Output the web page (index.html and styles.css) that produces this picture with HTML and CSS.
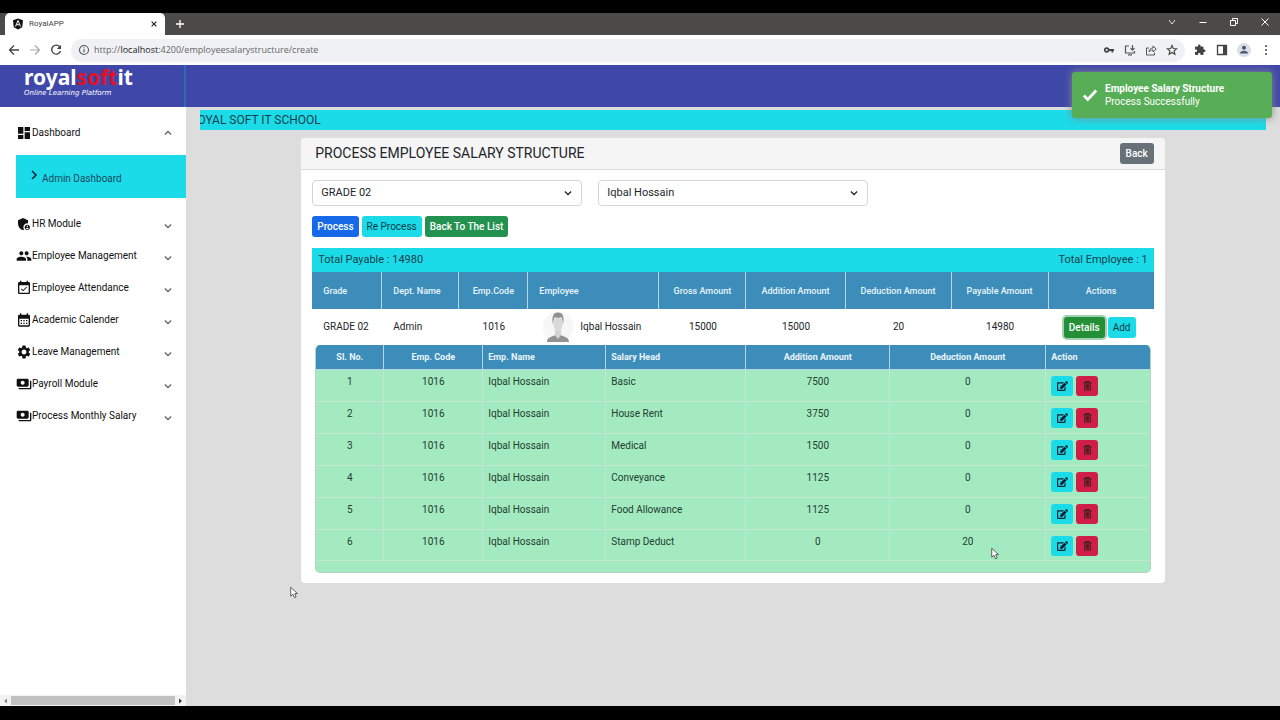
FILE: index.html
```html
<!DOCTYPE html>
<html lang="en">
<head>
<meta charset="utf-8">
<title>RoyalAPP</title>
<link rel="stylesheet" href="styles.css">
</head>
<body>
<svg class="sprite" aria-hidden="true">
  <symbol id="down" viewBox="0 0 16 16"><path d="M3 5.5l5 5 5-5" fill="none" stroke="currentColor" stroke-width="2"/></symbol>
  <symbol id="edit" viewBox="0 0 576 512"><path fill="currentColor" d="M402.6 83.2l90.2 90.2c3.8 3.8 3.8 10 0 13.8L274.4 405.6l-92.8 10.3c-12.4 1.4-22.9-9.1-21.5-21.5l10.3-92.8L388.8 83.2c3.8-3.8 10-3.8 13.8 0zm162-22.9l-48.8-48.8c-15.2-15.2-39.9-15.2-55.2 0l-35.4 35.4c-3.8 3.8-3.8 10 0 13.8l90.2 90.2c3.8 3.8 10 3.8 13.8 0l35.4-35.4c15.2-15.3 15.2-40 0-55.2zM384 346.2V448H64V128h229.8c3.2 0 6.2-1.3 8.5-3.5l40-40c7.6-7.6 2-20.5-8.5-20.5H48C21.5 64 0 85.5 0 112v352c0 26.5 21.5 48 48 48h352c26.5 0 48-21.5 48-48V306.2c0-10.7-12.9-16-20.5-8.5l-40 40c-2.2 2.3-3.5 5.3-3.5 8.5z"/></symbol>
  <symbol id="trash" viewBox="0 0 16 16"><path d="M1.500 3h13M5.500 2.500V1h5v1.500M3.500 3v11.500h9V3M6.200 5v7.500M8 5v7.500M9.800 5v7.500" fill="none" stroke="currentColor" stroke-width="1.700"/></symbol>
  <symbol id="pay" viewBox="0 0 24 24"><path fill="currentColor" d="M19 14V6c0-1.100-.9-2-2-2H3c-1.100 0-2 .9-2 2v8c0 1.100.9 2 2 2h14c1.100 0 2-.9 2-2zm-9-1c-1.660 0-3-1.340-3-3s1.340-3 3-3 3 1.340 3 3-1.340 3-3 3zm13-6v11c0 1.100-.9 2-2 2H4v-2h17V7h2z"/></symbol>
  <symbol id="pointer" viewBox="0 0 12 16"><path d="M1 1v12l3-2.700L6 15l2.200-1L6.300 9.500H10z" fill="#fff" stroke="#333" stroke-width="1"/></symbol>
</svg>

<div class="tabs">
  <div class="tab">
    <svg class="i12" viewBox="0 0 24 24"><path d="M12 1L2 4.500l1.500 14L12 23l8.500-4.500L22 4.500z" fill="#111"/><path d="M7 17l5-12 5 12M9 13.500h6" fill="none" stroke="#fff" stroke-width="2"/></svg>
    <span class="tab-name">RoyalAPP</span>
    <svg class="i8" viewBox="0 0 10 10"><path d="M2 2l6 6M8 2l-6 6" stroke="#222" stroke-width="1.500"/></svg>
  </div>
  <svg class="i12 plus" viewBox="0 0 12 12"><path d="M6 2v8M2 6h8" stroke="#fff" stroke-width="1.300"/></svg>
  <div class="win">
    <svg class="i12" viewBox="0 0 12 12"><path d="M3 4l3 4 3-4" fill="none" stroke="#ddd"/></svg>
    <svg class="i12" viewBox="0 0 12 12"><path d="M2.500 6.500h7" stroke="#fff"/></svg>
    <svg class="i12" viewBox="0 0 12 12"><path d="M2.500 4.500h5v5h-5zM4.500 4V2.500h5v5H8" fill="none" stroke="#fff"/></svg>
    <svg class="i12" viewBox="0 0 12 12"><path d="M2.500 2.500l7 7M9.500 2.500l-7 7" stroke="#fff"/></svg>
  </div>
</div>

<div class="toolbar">
  <svg class="i12" viewBox="0 0 12 12"><path d="M11 6H2M6 1.500L1.500 6 6 10.500" fill="none" stroke="#444" stroke-width="1.300"/></svg>
  <svg class="i12" viewBox="0 0 12 12"><path d="M1 6h9M6 1.500L10.500 6 6 10.500" fill="none" stroke="#aaa" stroke-width="1.200"/></svg>
  <svg class="i12" viewBox="0 0 12 12"><path d="M10 3.200A4.500 4.500 0 1 0 10.500 7" fill="none" stroke="#444" stroke-width="1.400"/><path d="M11 .8V5H6.800z" fill="#444"/></svg>
  <div class="address">
    <svg class="i12" viewBox="0 0 12 12"><circle cx="6" cy="6" r="4.500" fill="none" stroke="#555" stroke-width="1.100"/><path d="M6 5.200v3.300M6 3.200v1.100" stroke="#555" stroke-width="1.200"/></svg>
    <span class="url">http://<b>localhost</b>:4200/employeesalarystructure/create</span>
    <svg class="i12" viewBox="0 0 12 12"><circle cx="3.700" cy="6" r="1.900" fill="none" stroke="#444" stroke-width="1.700"/><path d="M5.500 6H11M9.300 6v2.500" stroke="#444" stroke-width="1.800"/></svg>
    <svg class="i12" viewBox="0 0 12 12"><path d="M5 2H1.500v7h9V7M4 10.800h4M8.500 1v5M6.500 4.200l2 2 2-2" fill="none" stroke="#555" stroke-width="1.200"/></svg>
    <svg class="i12" viewBox="0 0 12 12"><path d="M4 4H1.500v7h8V8.500M4 8c.2-2.500 1.500-3.800 4-4V2l3.200 3L8 7.800V6C6 6 5 6.500 4 8z" fill="none" stroke="#555"/></svg>
    <svg class="i12" viewBox="0 0 12 12"><path d="M6 1.500l1.300 3 3.300.3-2.500 2.200.8 3.300L6 8.500l-2.900 1.800.8-3.300-2.500-2.200 3.300-.3z" fill="none" stroke="#444" stroke-width="1.100"/></svg>
  </div>
  <div class="ext">
    <svg class="i12" viewBox="0 0 24 24"><path fill="#444" d="M20.500 11H19V7c0-1.100-.9-2-2-2h-4V3.500a2.500 2.500 0 0 0-5 0V5H4c-1.100 0-2 .9-2 2v3.800h1.500a2.700 2.700 0 0 1 0 5.400H2V20c0 1.100.9 2 2 2h3.800v-1.500a2.700 2.700 0 0 1 5.400 0V22H17c1.100 0 2-.9 2-2v-4h1.500a2.500 2.500 0 0 0 0-5z"/></svg>
    <svg class="i12" viewBox="0 0 12 12"><path d="M1.500 1.500h9v9h-9z" fill="none" stroke="#444" stroke-width="1.300"/><path d="M7 1h4v10H7z" fill="#444"/></svg>
    <span class="avatar"><svg class="i12" viewBox="0 0 12 12"><circle cx="6" cy="3.800" r="2" fill="#4a5570"/><path d="M2 9.500c0-2 2-2.800 4-2.800s4 .8 4 2.800z" fill="#4a5570"/></svg></span>
    <svg class="i12" viewBox="0 0 12 12"><circle cx="6" cy="2" r="1" fill="#444"/><circle cx="6" cy="6" r="1" fill="#444"/><circle cx="6" cy="10" r="1" fill="#444"/></svg>
  </div>
</div>

<header class="top">
  <div class="brand">
    <div class="logo">royal<span>soft</span>it</div>
    <div class="tagline">Online Learning Platform</div>
  </div>
</header>

<div class="shell">
  <aside class="side">
    <nav class="menu">
      <button class="item"><svg class="i16" viewBox="0 0 24 24"><path d="M3 13h8V3H3v10zm0 8h8v-6H3v6zm10 0h8V11h-8v10zm0-18v6h8V3h-8z"/></svg><span>Dashboard</span><svg class="arrow up"><use href="#down"/></svg></button>
      <a class="sub" href="#"><svg class="i12" viewBox="0 0 12 12"><path d="M4 2l4 4-4 4" fill="none" stroke="#123" stroke-width="1.500"/></svg><span>Admin Dashboard</span></a>
      <button class="item"><svg class="i16" viewBox="0 0 24 24"><path d="M17 11c.34 0 .67.04 1 .09V6.270L10.500 3 3 6.270v4.910c0 4.540 3.200 8.790 7.500 9.820.55-.13 1.080-.32 1.600-.55-.69-.98-1.100-2.170-1.100-3.450 0-3.310 2.690-6 6-6z"/><path d="M17 13c-2.210 0-4 1.790-4 4s1.790 4 4 4 4-1.790 4-4-1.790-4-4-4zm0 1.380c.62 0 1.120.51 1.120 1.120s-.51 1.120-1.120 1.120-1.120-.51-1.120-1.120.5-1.120 1.120-1.120zm0 5.370c-.93 0-1.740-.46-2.240-1.170.05-.72 1.510-1.080 2.240-1.080s2.190.36 2.240 1.080c-.5.71-1.310 1.170-2.240 1.170z"/></svg><span>HR Module</span><svg class="arrow"><use href="#down"/></svg></button>
      <button class="item"><svg class="i16" viewBox="0 0 24 24"><path d="M16 11c1.660 0 2.990-1.340 2.990-3S17.660 5 16 5c-1.660 0-3 1.340-3 3s1.340 3 3 3zm-8 0c1.660 0 2.990-1.340 2.990-3S9.660 5 8 5C6.340 5 5 6.340 5 8s1.340 3 3 3zm0 2c-2.330 0-7 1.170-7 3.500V19h14v-2.500c0-2.330-4.670-3.500-7-3.500zm8 0c-.29 0-.62.02-.97.05 1.160.84 1.970 1.970 1.970 3.450V19h6v-2.500c0-2.330-4.670-3.500-7-3.500z"/></svg><span>Employee Management</span><svg class="arrow"><use href="#down"/></svg></button>
      <button class="item"><svg class="i16" viewBox="0 0 24 24"><path d="M16.530 11.060L15.470 10l-4.880 4.880-2.120-2.120-1.060 1.060L10.590 17l5.940-5.940zM19 3h-1V1h-2v2H8V1H6v2H5c-1.110 0-1.990.9-1.990 2L3 19c0 1.100.89 2 2 2h14c1.100 0 2-.9 2-2V5c0-1.100-.9-2-2-2zm0 16H5V8h14v11z"/></svg><span>Employee Attendance</span><svg class="arrow"><use href="#down"/></svg></button>
      <button class="item"><svg class="i16" viewBox="0 0 24 24"><path d="M19 4h-1V2h-2v2H8V2H6v2H5c-1.110 0-1.990.9-1.990 2L3 20c0 1.100.89 2 2 2h14c1.100 0 2-.9 2-2V6c0-1.100-.9-2-2-2zm0 16H5V10h14v10zM7 12h2v2H7zm4 0h2v2h-2zm4 0h2v2h-2zm-8 4h2v2H7zm4 0h2v2h-2zm4 0h2v2h-2z"/></svg><span>Academic Calender</span><svg class="arrow"><use href="#down"/></svg></button>
      <button class="item"><svg class="i16" viewBox="0 0 24 24"><path d="M19.140 12.940c.04-.3.06-.61.06-.94 0-.32-.02-.64-.07-.94l2.030-1.580c.18-.14.23-.41.12-.61l-1.920-3.320c-.12-.22-.37-.29-.59-.22l-2.390.96c-.5-.38-1.030-.7-1.620-.94l-.36-2.540c-.04-.24-.24-.41-.48-.41h-3.840c-.24 0-.43.17-.47.41l-.36 2.540c-.59.24-1.130.57-1.620.94l-2.390-.96c-.22-.08-.47 0-.59.22L2.740 8.870c-.12.21-.08.47.12.61l2.030 1.580c-.05.3-.09.63-.09.94s.02.64.07.94l-2.030 1.580c-.18.14-.23.41-.12.61l1.920 3.320c.12.22.37.29.59.22l2.390-.96c.5.38 1.030.7 1.620.94l.36 2.540c.05.24.24.41.48.41h3.840c.24 0 .44-.17.47-.41l.36-2.540c.59-.24 1.130-.56 1.620-.94l2.390.96c.22.08.47 0 .59-.22l1.920-3.320c.12-.22.07-.47-.12-.61l-2.010-1.580zM12 15.600c-1.980 0-3.600-1.620-3.600-3.600s1.620-3.600 3.600-3.600 3.600 1.620 3.600 3.600-1.620 3.600-3.600 3.600z"/></svg><span>Leave Management</span><svg class="arrow"><use href="#down"/></svg></button>
      <button class="item"><svg class="i16"><use href="#pay"/></svg><span>Payroll Module</span><svg class="arrow"><use href="#down"/></svg></button>
      <button class="item"><svg class="i16"><use href="#pay"/></svg><span>Process Monthly Salary</span><svg class="arrow"><use href="#down"/></svg></button>
    </nav>
    <div class="scroll">
      <svg viewBox="0 0 10 10"><path d="M6.500 2.500v5L3.500 5z" fill="#888"/></svg>
      <div class="thumb"></div>
      <svg viewBox="0 0 10 10"><path d="M3.500 2.500v5l3-2.500z" fill="#333"/></svg>
    </div>
  </aside>

  <main class="main">
    <div class="ticker">ROYAL SOFT IT SCHOOL</div>
    <section class="card">
      <div class="card-head">
        <h1>PROCESS EMPLOYEE SALARY STRUCTURE</h1>
        <button class="btn gray">Back</button>
      </div>
      <div class="card-body">
        <div class="filters">
          <div class="pick"><select aria-label="Grade"><option>GRADE 02</option></select><svg><use href="#down"/></svg></div>
          <div class="pick"><select aria-label="Employee"><option>Iqbal Hossain</option></select><svg><use href="#down"/></svg></div>
        </div>
        <div class="actions">
          <button class="btn blue">Process</button>
          <button class="btn cyan">Re Process</button>
          <button class="btn green">Back To The List</button>
        </div>
        <div class="totals"><span>Total Payable : 14980</span><span>Total Employee : 1</span></div>
        <table class="grid">
          <colgroup><col class="g1"><col class="g2"><col class="g3"><col class="g4"><col class="g5"><col class="g6"><col class="g7"><col class="g8"><col class="g9"></colgroup>
          <thead>
            <tr><th class="l">Grade</th><th class="l">Dept. Name</th><th>Emp.Code</th><th class="l">Employee</th><th>Gross Amount</th><th>Addition Amount</th><th>Deduction Amount</th><th>Payable Amount</th><th>Actions</th></tr>
          </thead>
          <tbody>
            <tr>
              <td class="l">GRADE 02</td><td class="l">Admin</td><td>1016</td>
              <td><div class="person"><svg class="photo" viewBox="0 0 32 32"><circle cx="16" cy="16" r="15.500" fill="#f7f7f7"/><path d="M5 31c0-5 5-5 8-7l3 3 3-3c3 2 8 2 8 7z" fill="#929292"/><path d="M13 19h6v5l-3 4-3-4z" fill="#d4d4d4"/><ellipse cx="16" cy="12.500" rx="4.500" ry="8" fill="#d9d9d9"/><path d="M11 14C9.500 6 11 1.500 16 1.500S22.500 6 21 14c0-4-1-6-1.500-8-2 1-5 1-7 0-.5 2-1.500 4-1.500 8z" fill="#8e8e8e"/></svg><span>Iqbal Hossain</span></div></td>
              <td>15000</td><td>15000</td><td>20</td><td>14980</td>
              <td><div class="pair"><button class="btn green focus">Details</button><button class="btn cyan">Add</button></div></td>
            </tr>
            <tr>
              <td class="nest" colspan="9">
                <div class="detail">
                <table class="heads">
                  <colgroup><col class="h1"><col class="h2"><col class="h3"><col class="h4"><col class="h5"><col class="h6"><col class="h7"></colgroup>
                  <thead><tr><th>Sl. No.</th><th>Emp. Code</th><th class="l">Emp. Name</th><th class="l">Salary Head</th><th>Addition Amount</th><th>Deduction Amount</th><th class="l">Action</th></tr></thead>
                  <tbody>
                    <tr><td>1</td><td>1016</td><td class="l">Iqbal Hossain</td><td class="l">Basic</td><td>7500</td><td>0</td><td class="l"><div class="tools"><button class="ico cyan" aria-label="Edit"><svg><use href="#edit"/></svg></button><button class="ico red" aria-label="Delete"><svg><use href="#trash"/></svg></button></div></td></tr>
                    <tr><td>2</td><td>1016</td><td class="l">Iqbal Hossain</td><td class="l">House Rent</td><td>3750</td><td>0</td><td class="l"><div class="tools"><button class="ico cyan" aria-label="Edit"><svg><use href="#edit"/></svg></button><button class="ico red" aria-label="Delete"><svg><use href="#trash"/></svg></button></div></td></tr>
                    <tr><td>3</td><td>1016</td><td class="l">Iqbal Hossain</td><td class="l">Medical</td><td>1500</td><td>0</td><td class="l"><div class="tools"><button class="ico cyan" aria-label="Edit"><svg><use href="#edit"/></svg></button><button class="ico red" aria-label="Delete"><svg><use href="#trash"/></svg></button></div></td></tr>
                    <tr><td>4</td><td>1016</td><td class="l">Iqbal Hossain</td><td class="l">Conveyance</td><td>1125</td><td>0</td><td class="l"><div class="tools"><button class="ico cyan" aria-label="Edit"><svg><use href="#edit"/></svg></button><button class="ico red" aria-label="Delete"><svg><use href="#trash"/></svg></button></div></td></tr>
                    <tr><td>5</td><td>1016</td><td class="l">Iqbal Hossain</td><td class="l">Food Allowance</td><td>1125</td><td>0</td><td class="l"><div class="tools"><button class="ico cyan" aria-label="Edit"><svg><use href="#edit"/></svg></button><button class="ico red" aria-label="Delete"><svg><use href="#trash"/></svg></button></div></td></tr>
                    <tr><td>6</td><td>1016</td><td class="l">Iqbal Hossain</td><td class="l">Stamp Deduct</td><td>0</td><td>20</td><td class="l"><div class="tools"><button class="ico cyan" aria-label="Edit"><svg><use href="#edit"/></svg></button><button class="ico red" aria-label="Delete"><svg><use href="#trash"/></svg></button></div></td></tr>
                  </tbody>
                </table>
                </div>
              </td>
            </tr>
          </tbody>
        </table>
      </div>
    </section>
  </main>
</div>

<div class="toast" role="status">
  <svg viewBox="0 0 18 16"><path d="M2 8.500l4.500 4.500L16 3" fill="none" stroke="#fff" stroke-width="3.200"/></svg>
  <div><strong>Employee Salary Structure</strong><p>Process Successfully</p></div>
</div>
<svg class="pointer p1"><use href="#pointer"/></svg>
<svg class="pointer p2"><use href="#pointer"/></svg>
</body>
</html>
```
FILE: styles.css
```css
* { box-sizing: border-box; }
body {
  margin: 0;
  min-height: 100vh;
  padding: 13px 0 14px;
  display: flex;
  flex-direction: column;
  background: #000;
  color: #212529;
  font: 10px/16px Roboto, sans-serif;
}
button, select { font: inherit; color: inherit; border: 0; margin: 0; cursor: pointer; }
svg { display: block; flex: none; }
.sprite { position: absolute; width: 0; height: 0; }
.i8 { width: 8px; height: 8px; }
.i12 { width: 12px; height: 12px; }
.i16 { width: 16px; height: 16px; }

/* Browser window */
.tabs { display: flex; align-items: center; height: 22px; background: #4b4a48; padding-left: 5px; }
.tab { display: flex; align-items: center; gap: 5px; width: 160px; height: 22px; padding: 0 7px; background: #fff; border-radius: 5px 5px 0 0; }
.tab-name { flex: 1; font-size: 8px; color: #444; }
.plus { margin-left: 9px; }
.win { display: flex; gap: 19px; margin-left: auto; padding: 0 9px 4px 0; }
.toolbar { display: flex; align-items: center; gap: 9px; height: 30px; padding: 0 8px; background: #fff; }
.address { flex: 1; display: flex; align-items: center; gap: 9px; height: 23px; padding: 0 7px; background: #eff1f5; border-radius: 12px; }
.url { flex: 1; margin-left: -5px; font-family: "Open Sans", sans-serif; font-size: 9px; color: #666; }
.url b { font-weight: 400; color: #222; }
.ext { display: flex; align-items: center; gap: 10px; }
.avatar { padding: 1px; margin: 0 -1px; background: #dcdfe6; border-radius: 50%; }

/* App header */
.top { background: #3f48a9; height: 42px; }
.brand { width: 186px; height: 42px; padding-left: 24px; border-right: 2px solid #2c6cb0; color: #fff; }
.logo { font: bold 21px/24px "Noto Sans", sans-serif; }
.logo span { color: #e01228; }
.tagline { font: italic 7px/8px "DejaVu Sans", sans-serif; }

.shell { flex: 1; display: flex; background: #ddd; }
.side { width: 186px; display: flex; flex-direction: column; background: #fff; }
.menu { flex: 1; padding: 10px 0 0 16px; }
.item { display: flex; align-items: center; width: 100%; height: 32px; padding: 0 13px 0 0; background: none; color: #111; text-align: left; }
.item span { flex: 1; }
.item svg { fill: currentColor; }
.item .arrow { width: 10px; height: 10px; color: #666; margin-top: 3px; }
.item .up { transform: rotate(180deg); margin: 0; }
.sub { display: flex; align-items: center; gap: 2px; height: 43px; margin: 6px 0 10px; padding-left: 12px; background: #1bdbe9; color: #174a5c; text-decoration: none; }
.sub svg { margin-bottom: 4px; }
.sub span { padding-top: 5px; }
.scroll { display: flex; align-items: center; height: 11px; background: #f2f2f2; }
.scroll svg { width: 11px; height: 10px; }
.thumb { flex: 1; height: 9px; background: #c1c1c1; }

.main { flex: 1; min-width: 0; padding: 3px 14px 0; }
.ticker { height: 20px; overflow: hidden; background: #1bdbe9; font-size: 12px; line-height: 20px; text-indent: -10px; color: #15414b; }
.card { width: 81%; margin: 8px auto 0; background: #fff; border-radius: 4px; overflow: hidden; }
.card-head { display: flex; align-items: center; justify-content: space-between; height: 32px; padding: 0 11px 1px 14px; background: #f5f5f5; border-bottom: 1px solid #dadada; }
h1 { margin: 0; font-size: 14px; font-weight: 400; }
.card-body { padding: 10px 11px; }
.btn { height: 21px; padding: 0 5px; border-radius: 3px; font-weight: 500; line-height: 21px; white-space: nowrap; }
.gray { background: #687078; color: #fff; }
.blue { background: #1769e8; color: #fff; }
.cyan { background: #1bdbe9; color: #123c48; }
.green { background: #239150; color: #fff; }
.red { background: #cf1f48; color: #45201d; }
.btn.cyan { font-weight: 400; }
.filters { display: grid; grid-template-columns: 270px 270px; gap: 16px; }
.pick { position: relative; }
.pick select { appearance: none; width: 100%; height: 26px; padding: 0 8px; background: #fff; border: 1px solid #d3d6da; border-radius: 4px; font-size: 11px; }
.pick svg { position: absolute; right: 9px; top: 8px; width: 10px; height: 10px; pointer-events: none; }
.actions { display: flex; gap: 3px; margin: 10px 0 11px; }
.gray { padding: 0 6px; }
.totals { display: flex; justify-content: space-between; height: 24px; padding: 0 6px; background: #1bdbe9; font-size: 11px; line-height: 23px; color: #15414b; }

table { width: 100%; table-layout: fixed; border-collapse: separate; border-spacing: 0; }
th, td { padding: 0; text-align: center; }
.l { text-align: left; }
.grid th { background: #3c8dba; color: #e9f5fa; font-size: 9px; font-weight: 500; border-right: 1px solid #b9d6e3; }
.grid th:last-child { border-right: 0; }
.grid > thead th { height: 37px; }
.grid > thead .l, .grid > tbody > tr > td.l { padding-left: 11px; }
.grid > tbody > tr > td { height: 36px; }
.g1 { width: 70px; } .g2 { width: 77px; } .g3 { width: 69px; } .g4 { width: 131px; } .g5 { width: 87px; }
.g6 { width: 99px; } .g7 { width: 106px; } .g8 { width: 97px; } .g9 { width: 105px; }
.person { display: flex; align-items: center; gap: 6px; padding-left: 14px; }
.photo { width: 32px; height: 32px; }
.pair { display: flex; justify-content: center; gap: 3px; padding-right: 3px; }
.focus { background: #238f37; box-shadow: 0 0 0 2px #a3cfb3; }
.grid .nest { padding: 0 3px; }
.detail { padding-bottom: 11px; background: #a4eac0; border-radius: 5px; overflow: hidden; border: 1px solid #b5d4c2; border-top: 0; }
.grid .heads th { height: 25px; font-weight: 700; border-bottom: 1px solid #b9d6e3; }
.heads td { height: 32px; padding-top: 4px; vertical-align: top; border-right: 1px solid #c2e6d0; border-bottom: 1px solid #c2e6d0; color: #214031; }
.heads tr:last-child td { height: 31px; }
.heads td:last-child { border-right: 0; }
.heads .l { padding-left: 5px; }
.h1 { width: 68px; } .h2 { width: 99px; } .h3 { width: 123px; } .h4 { width: 140px; } .h5 { width: 144px; } .h6 { width: 156px; } .h7 { width: 105px; }
.tools { display: flex; gap: 3px; padding-top: 2px; }
.ico { display: flex; align-items: center; justify-content: center; width: 22px; height: 20px; padding: 0; border-radius: 3px; }
.ico svg { width: 11px; height: 10px; }
.ico.cyan { color: #102030; }

.toast { position: absolute; top: 72px; right: 8px; width: 200px; display: flex; align-items: center; gap: 7px; padding: 10px; background: #57ae56; border-radius: 3px; box-shadow: 0 0 8px #888; color: #fff; line-height: 13px; }
.toast svg { width: 16px; height: 16px; }
.toast p { margin: 0; }
.pointer { position: absolute; width: 9px; height: 13px; }
.p1 { left: 290px; top: 586px; }
.p2 { left: 991px; top: 547px; }
```
